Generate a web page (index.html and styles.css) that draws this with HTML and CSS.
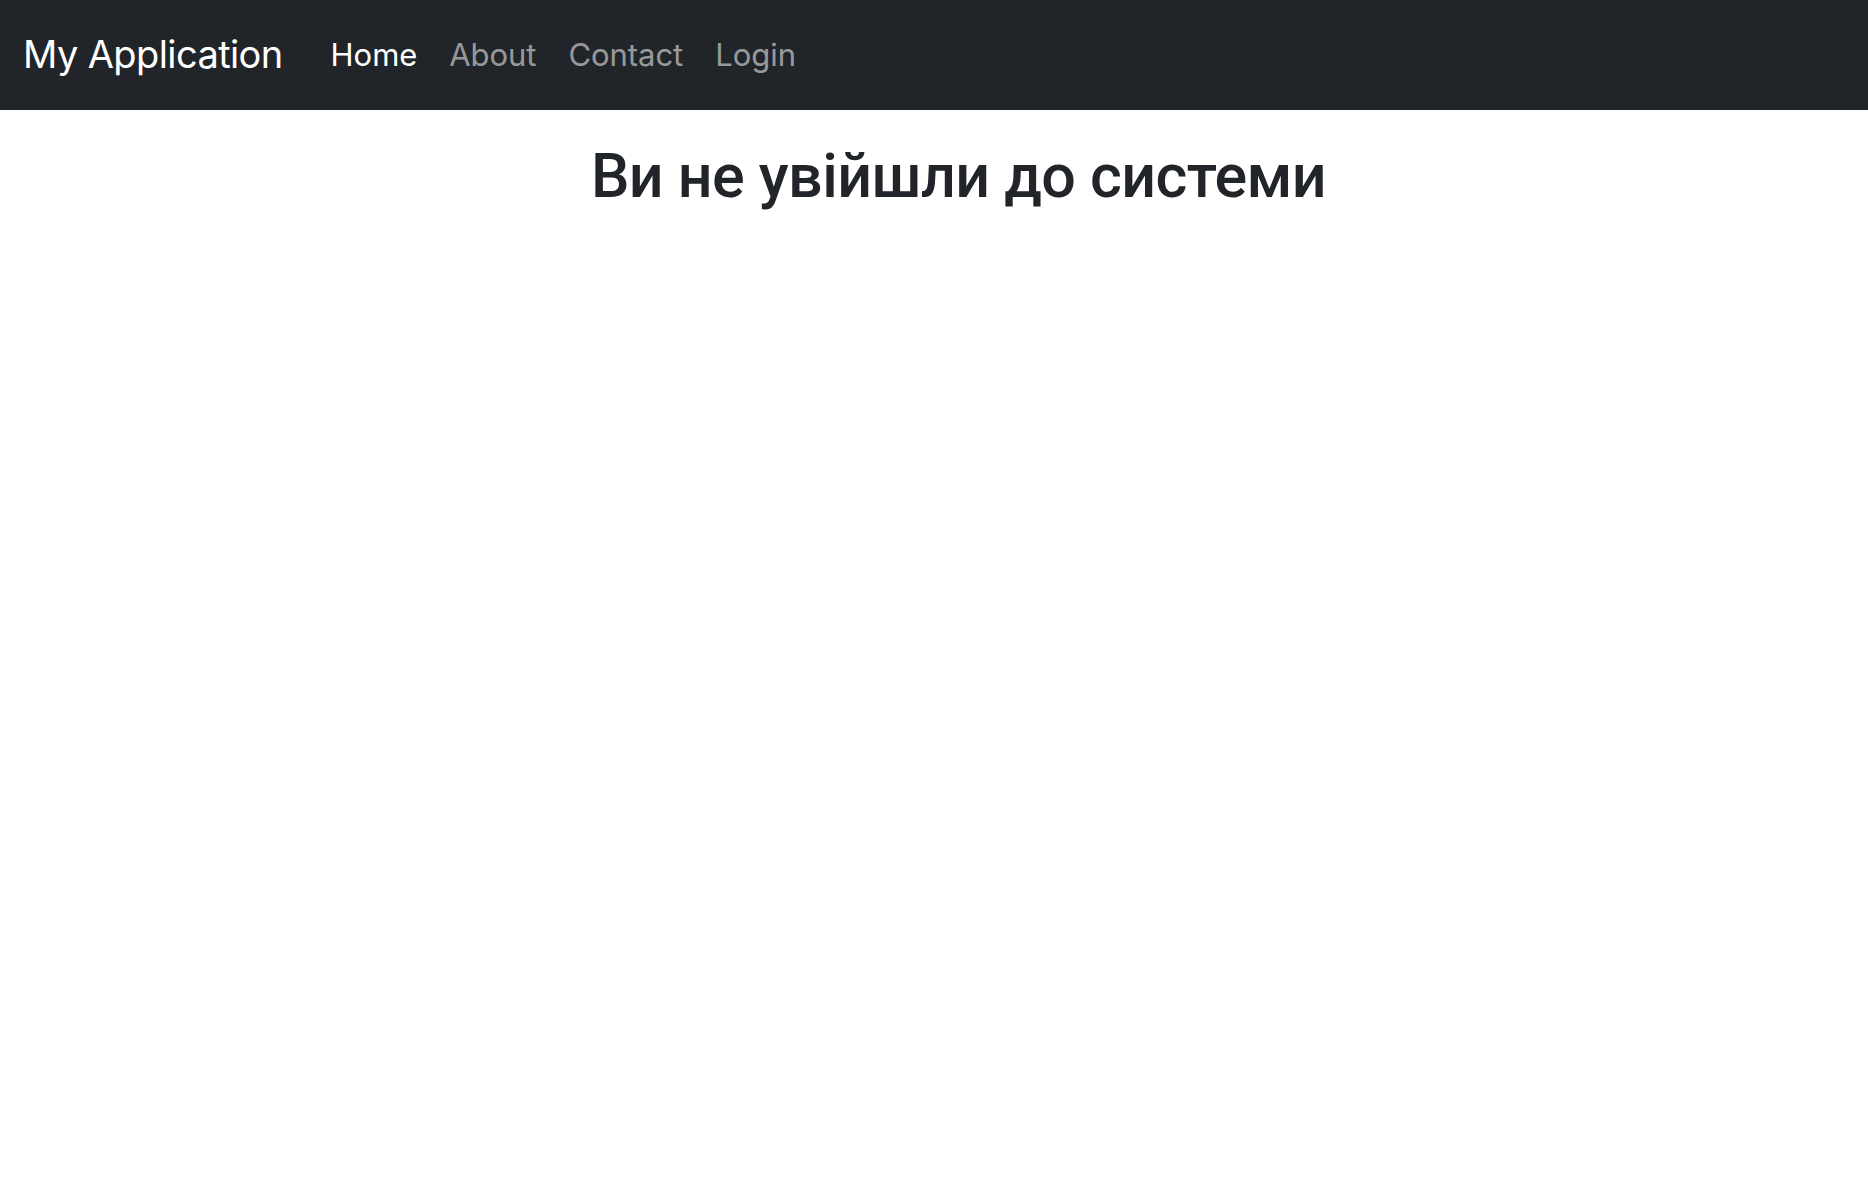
FILE: index.html
```html
<!DOCTYPE html>
<html lang="uk">
<head>
<meta charset="utf-8">
<title>My Application</title>
<link rel="stylesheet" href="styles.css">
</head>
<body>
<nav class="navbar">
  <a class="brand" href="#">My Application</a>
  <ul class="nav">
    <li><a class="nav-link active" href="#">Home</a></li>
    <li><a class="nav-link" href="#">About</a></li>
    <li><a class="nav-link" href="#">Contact</a></li>
    <li><a class="nav-link" href="#">Login</a></li>
  </ul>
</nav>
<main class="content">
  <h1 class="title">Ви не увійшли до системи</h1>
</main>
</body>
</html>
```

FILE: styles.css
```css
html, body {
  margin: 0;
  padding: 0;
  background: #fff;
  font-family: Inter, "Noto Sans", "Liberation Sans", sans-serif;
  color: #212529;
}
.navbar {
  display: flex;
  align-items: center;
  height: 110px;
  background: #212529;
  padding: 0 23px;
  box-sizing: border-box;
}
.brand {
  color: #fff;
  text-decoration: none;
  font-size: 38px;
  margin-right: 32px;
  letter-spacing: -0.6px;
  margin-top: -2px;
}
.nav {
  display: flex;
  list-style: none;
  margin: 0;
  padding: 0;
  margin-top: -2px;
}
.nav-link {
  display: block;
  padding: 0 16px;
  font-size: 31px;
  color: rgba(255, 255, 255, 0.55);
  text-decoration: none;
  letter-spacing: -0.05px;
}
.nav-link.active {
  color: #fff;
}
.content {
  text-align: center;
  padding-top: 30px;
  padding-left: 49px;
}
.title {
  margin: 0;
  font-family: Roboto, Inter, "Liberation Sans", sans-serif;
  font-size: 61px;
  font-weight: 500;
  line-height: 1.2;
  letter-spacing: -0.55px;
}
```
